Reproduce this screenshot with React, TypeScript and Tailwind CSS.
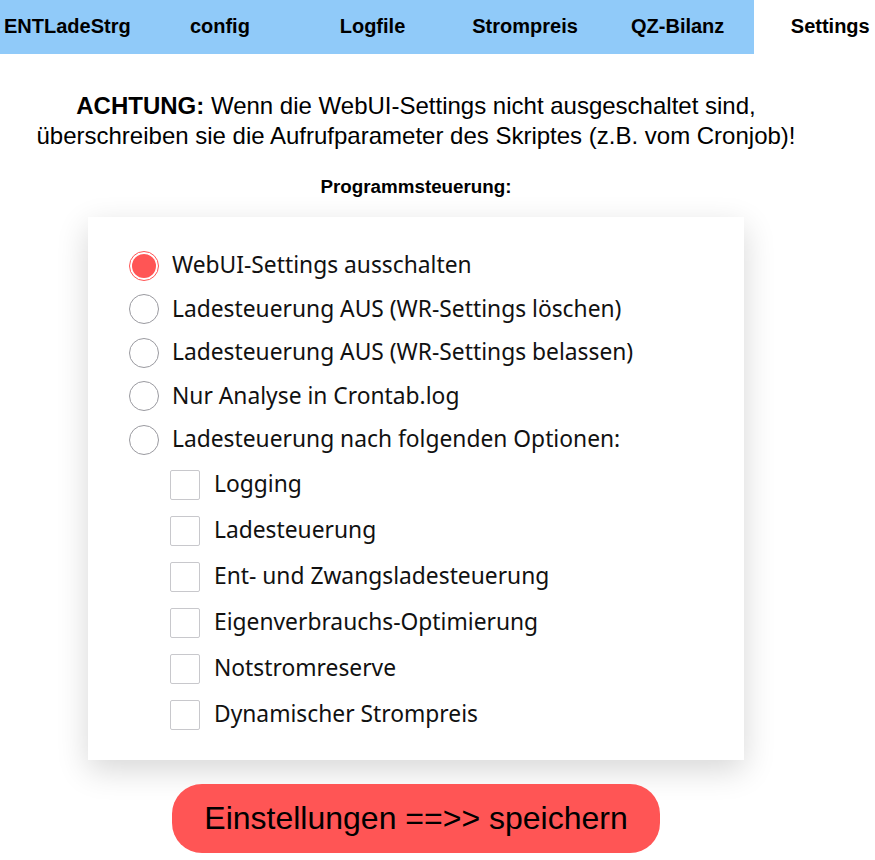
import React, { useState } from 'react';

const TABS = ['ENTLadeStrg', 'config', 'Logfile', 'Strompreis', 'QZ-Bilanz', 'Settings'];

const MODES = [
  'WebUI-Settings ausschalten',
  'Ladesteuerung AUS (WR-Settings löschen)',
  'Ladesteuerung AUS (WR-Settings belassen)',
  'Nur Analyse in Crontab.log',
  'Ladesteuerung nach folgenden Optionen:',
];

const OPTIONS = [
  'Logging',
  'Ladesteuerung',
  'Ent- und Zwangsladesteuerung',
  'Eigenverbrauchs-Optimierung',
  'Notstromreserve',
  'Dynamischer Strompreis',
];

const App: React.FC = () => {
  const [mode, setMode] = useState(0);
  const [opts, setOpts] = useState<boolean[]>(OPTIONS.map(() => false));

  return (
    <div className="w-[875px] h-[860px] overflow-hidden bg-white font-['Liberation_Sans',Arial,sans-serif] text-black">
      {/* Tabs */}
      <div className="flex h-[54px] -ml-[9px]">
        {TABS.map((t, i) => (
          <div
            key={t}
            className={`w-[152.6px] shrink-0 flex items-center justify-center pb-[2px] text-[20px] font-bold ${
              i === TABS.length - 1 ? 'bg-white' : 'bg-[#90caf9]'
            }`}
          >
            {t}
          </div>
        ))}
      </div>

      <div className="w-[832px] flex flex-col items-center">
        <p className="mt-[37px] text-center text-[24px] leading-[30px]">
          <b>ACHTUNG:</b> Wenn die WebUI-Settings nicht ausgeschaltet sind,
          <br />
          überschreiben sie die Aufrufparameter des Skriptes (z.B. vom Cronjob)!
        </p>
        <p className="mt-[25px] text-[18.8px] font-bold leading-[22px]">Programmsteuerung:</p>

        {/* Card */}
        <div className="mt-[19px] w-[656px] h-[543px] bg-white shadow-[0_10px_30px_rgba(0,0,0,0.16)] pl-[41px] pt-[27px] font-['Noto_Sans','Open_Sans',sans-serif] text-[22.8px] text-[#111]">
          {MODES.map((m, i) => (
            <label key={m} className="flex items-center h-[43.5px] cursor-pointer" onClick={() => setMode(i)}>
              {mode === i ? (
                <span className="w-[30px] h-[30px] rounded-full border-[1.5px] border-[#ff5555] p-[2px] bg-white">
                  <span className="block w-full h-full rounded-full bg-[#ff5555]" />
                </span>
              ) : (
                <span className="w-[30px] h-[30px] rounded-full border border-[#9a9aa0] bg-white" />
              )}
              <span className="ml-[13px] leading-none">{m}</span>
            </label>
          ))}
          <div className="pl-[41px]">
            {OPTIONS.map((o, i) => (
              <label
                key={o}
                className="flex items-center h-[46px] cursor-pointer"
                onClick={() => setOpts(opts.map((v, j) => (j === i ? !v : v)))}
              >
                <span
                  className={`w-[30px] h-[30px] rounded-[2px] border border-[#c8c8cc] ${opts[i] ? 'bg-[#ff5555]' : 'bg-white'}`}
                />
                <span className="ml-[14px] leading-none">{o}</span>
              </label>
            ))}
          </div>
        </div>

        <button className="mt-[24px] w-[488px] h-[69px] rounded-[30px] bg-[#ff5555] text-[32px] text-black pb-[2px]">
          Einstellungen ==&gt;&gt; speichern
        </button>
      </div>
    </div>
  );
};

export default App;
